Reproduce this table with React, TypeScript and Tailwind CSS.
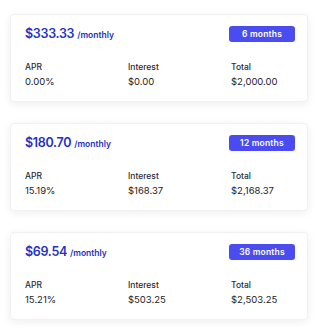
const plans = [
  { monthly: "$333.33", months: "6 months", apr: "0.00%", interest: "$0.00", total: "$2,000.00" },
  { monthly: "$180.70", months: "12 months", apr: "15.19%", interest: "$168.37", total: "$2,168.37" },
  { monthly: "$69.54", months: "36 months", apr: "15.21%", interest: "$503.25", total: "$2,503.25" },
];

function Stat({ label, value }: { label: string; value: string }) {
  return (
    <div>
      <div className="text-[8.5px] font-medium leading-[14px] text-[#2a2a33]">{label}</div>
      <div className="text-[9.5px] leading-[16px] text-[#1c1c24]">{value}</div>
    </div>
  );
}

export default function App() {
  return (
    <div className="min-h-[330px] bg-white px-[10px] pt-[14px] font-['Inter',sans-serif]">
      <div className="flex flex-col gap-[21px]">
        {plans.map((p) => (
          <div key={p.months}
            className="h-[88px] rounded-[4px] border border-[#f1f1f3] bg-white pl-[14px] pr-[12px] pt-[10px] shadow-[0_2px_8px_rgba(0,0,0,0.07)]">
            <div className="flex h-[18px] items-center justify-between">
              <div className="flex items-baseline gap-[3px] text-[#2530c5]">
                <span className="text-[12.5px] font-semibold tracking-[-0.3px]">{p.monthly}</span>
                <span className="text-[8.5px] font-semibold">/monthly</span>
              </div>
              <span className="flex h-[16px] w-[66px] items-center justify-center rounded-[3px] bg-[#4b4cf0] text-[8.5px] font-semibold tracking-[0.2px] text-white">
                {p.months}
              </span>
            </div>
            <div className="mt-[17px] grid grid-cols-[103px_103px_1fr]">
              <Stat label="APR" value={p.apr} />
              <Stat label="Interest" value={p.interest} />
              <Stat label="Total" value={p.total} />
            </div>
          </div>
        ))}
      </div>
    </div>
  );
}
